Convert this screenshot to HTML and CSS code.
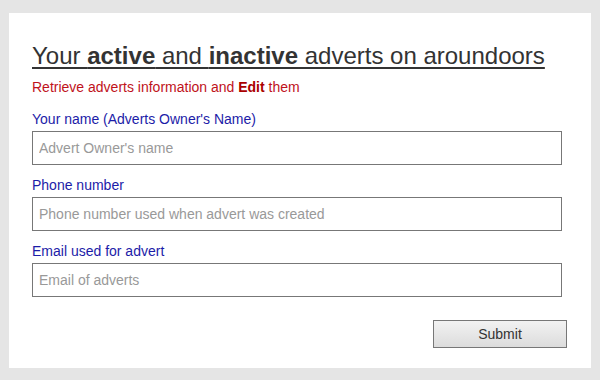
FILE: index.html
```html
<!DOCTYPE html>
<html>
<head>
    <meta charset="utf-8">
    <title>My adverts</title>
    <link rel="stylesheet" href="styles.css">
</head>
<body>
<div class="card">
    <h1 class="title">Your <b>active</b> and <b>inactive</b> adverts on aroundoors</h1>
    <p class="intro">Retrieve adverts information and <b>Edit</b> them</p>
    <form class="form">
        <label class="field">
            <span class="field-label">Your name (Adverts Owner's Name)</span>
            <input type="text" class="field-input" placeholder="Advert Owner's name"/>
        </label>
        <label class="field">
            <span class="field-label">Phone number</span>
            <input type="text" class="field-input" placeholder="Phone number used when advert was created"/>
        </label>
        <label class="field">
            <span class="field-label">Email used for advert</span>
            <input type="text" class="field-input" placeholder="Email of adverts"/>
        </label>
        <div class="actions">
            <button type="button" class="btn-submit">Submit</button>
        </div>
    </form>
</div>
</body>
</html>
```

FILE: styles.css
```css
html, body {
    margin: 0;
    height: 100%;
}

body {
    background: #e5e5e5;
    padding: 13px 9px 12px 9px;
    box-sizing: border-box;
    font-family: "Liberation Sans", Arial, sans-serif;
}

.card {
    background: #fff;
    height: 100%;
    box-sizing: border-box;
    padding: 29px 24px 0 23px;
}

.title {
    margin: 0;
    font-size: 24px;
    font-weight: normal;
    line-height: 28px;
    color: #333;
    text-decoration: underline;
    text-underline-offset: 3px;
    text-decoration-thickness: 2px;
}

.title b {
    font-weight: bold;
}

.intro {
    margin: 9px 0 0 0;
    font-size: 14px;
    line-height: 16px;
    color: #c0121b;
}

.intro b {
    color: #a00;
}

.form {
    margin-top: 16px;
}

.field {
    display: block;
    margin-bottom: 12px;
}

.field-label {
    display: block;
    font-size: 14px;
    line-height: 16px;
    color: #1c1ca8;
    margin-bottom: 4px;
}

.field-input {
    display: block;
    width: 530px;
    height: 34px;
    box-sizing: border-box;
    margin: 0;
    padding: 0 6px;
    border: 1px solid #777;
    border-radius: 0;
    font-family: "Liberation Sans", Arial, sans-serif;
    font-size: 14px;
    color: #333;
    outline: none;
}

.field-input::placeholder {
    color: #999;
}

.actions {
    display: flex;
    justify-content: flex-end;
    margin-top: 23px;
}

.btn-submit {
    width: 134px;
    height: 28px;
    border: 1px solid #777;
    border-radius: 0;
    background: linear-gradient(#f2f2f2, #dcdcdc);
    font-family: "Liberation Sans", Arial, sans-serif;
    font-size: 14px;
    color: #333;
    padding: 0;
}
```
